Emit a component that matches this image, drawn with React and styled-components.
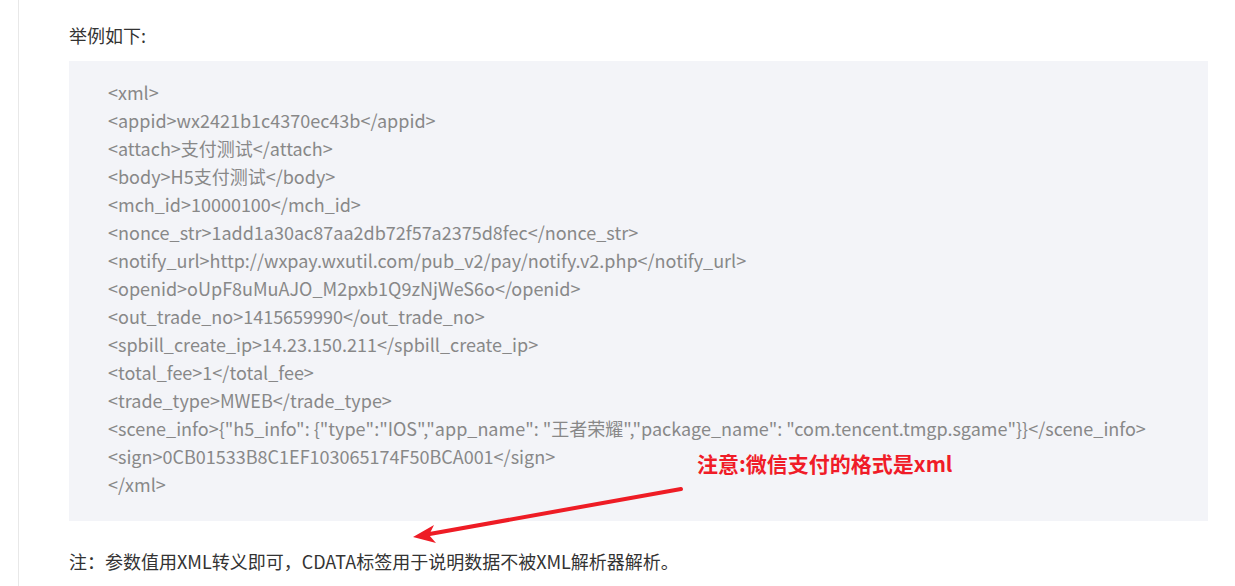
import React from "react";
import styled, { createGlobalStyle } from "styled-components";

const Global = createGlobalStyle`
  html, body { margin: 0; padding: 0; background: #fff; }
  body { font-family: "Noto Sans CJK SC", "Noto Sans", sans-serif; }
`;

const Page = styled.div`
  position: relative;
  width: 1235px;
  height: 586px;
  overflow: hidden;
  padding-left: 18px;
  box-sizing: border-box;
`;

const Article = styled.div`
  border-left: 1px solid #e8e8e8;
  padding: 21px 27px 0 50px;
  height: 100%;
  box-sizing: border-box;
`;

const Para = styled.p`
  margin: 0;
  font-size: 18px;
  line-height: 28px;
  color: #333;
  font-family: "Noto Sans CJK SC", sans-serif;
`;

const CodeBlock = styled.div`
  margin-top: 12px;
  background: #f3f4f8;
  padding: 17px 20px 23px 39px;
  height: 460px;
  box-sizing: border-box;
`;

const CodeLine = styled.div`
  font-size: 18px;
  line-height: 28px;
  color: #888;
  white-space: pre;
  font-family: "Noto Sans CJK SC", sans-serif;
`;

const Note = styled(Para)`
  margin-top: 26px;
`;

const Annotation = styled.div`
  position: absolute;
  left: 697px;
  top: 448px;
  font-size: 21px;
  line-height: 30px;
  font-weight: 700;
  color: #f01c28;
  font-family: "Noto Sans CJK SC", sans-serif;
`;

const ArrowSvg = styled.svg`
  position: absolute;
  left: 0;
  top: 0;
  pointer-events: none;
`;

const lines = [
  "<xml>",
  "<appid>wx2421b1c4370ec43b</appid>",
  "<attach>支付测试</attach>",
  "<body>H5支付测试</body>",
  "<mch_id>10000100</mch_id>",
  "<nonce_str>1add1a30ac87aa2db72f57a2375d8fec</nonce_str>",
  "<notify_url>http://wxpay.wxutil.com/pub_v2/pay/notify.v2.php</notify_url>",
  "<openid>oUpF8uMuAJO_M2pxb1Q9zNjWeS6o</openid>",
  "<out_trade_no>1415659990</out_trade_no>",
  "<spbill_create_ip>14.23.150.211</spbill_create_ip>",
  "<total_fee>1</total_fee>",
  "<trade_type>MWEB</trade_type>",
  '<scene_info>{"h5_info": {"type":"IOS","app_name": "王者荣耀","package_name": "com.tencent.tmgp.sgame"}}</scene_info>',
  "<sign>0CB01533B8C1EF103065174F50BCA001</sign>",
  "</xml>",
];

export default function App() {
  return (
    <>
      <Global />
      <Page>
        <Article>
          <Para>举例如下:</Para>
          <CodeBlock>
            {lines.map((l, i) => (
              <CodeLine key={i}>{l}</CodeLine>
            ))}
          </CodeBlock>
          <Note>注：参数值用XML转义即可，CDATA标签用于说明数据不被XML解析器解析。</Note>
        </Article>
        <Annotation>注意:微信支付的格式是xml</Annotation>
        <ArrowSvg width="1235" height="586" viewBox="0 0 1235 586">
          <line x1="681" y1="489" x2="424" y2="535" stroke="#ee1c25" strokeWidth="4" strokeLinecap="round" />
          <polygon points="413,537 434,525 429,535 436,543" fill="#ee1c25" />
        </ArrowSvg>
      </Page>
    </>
  );
}
